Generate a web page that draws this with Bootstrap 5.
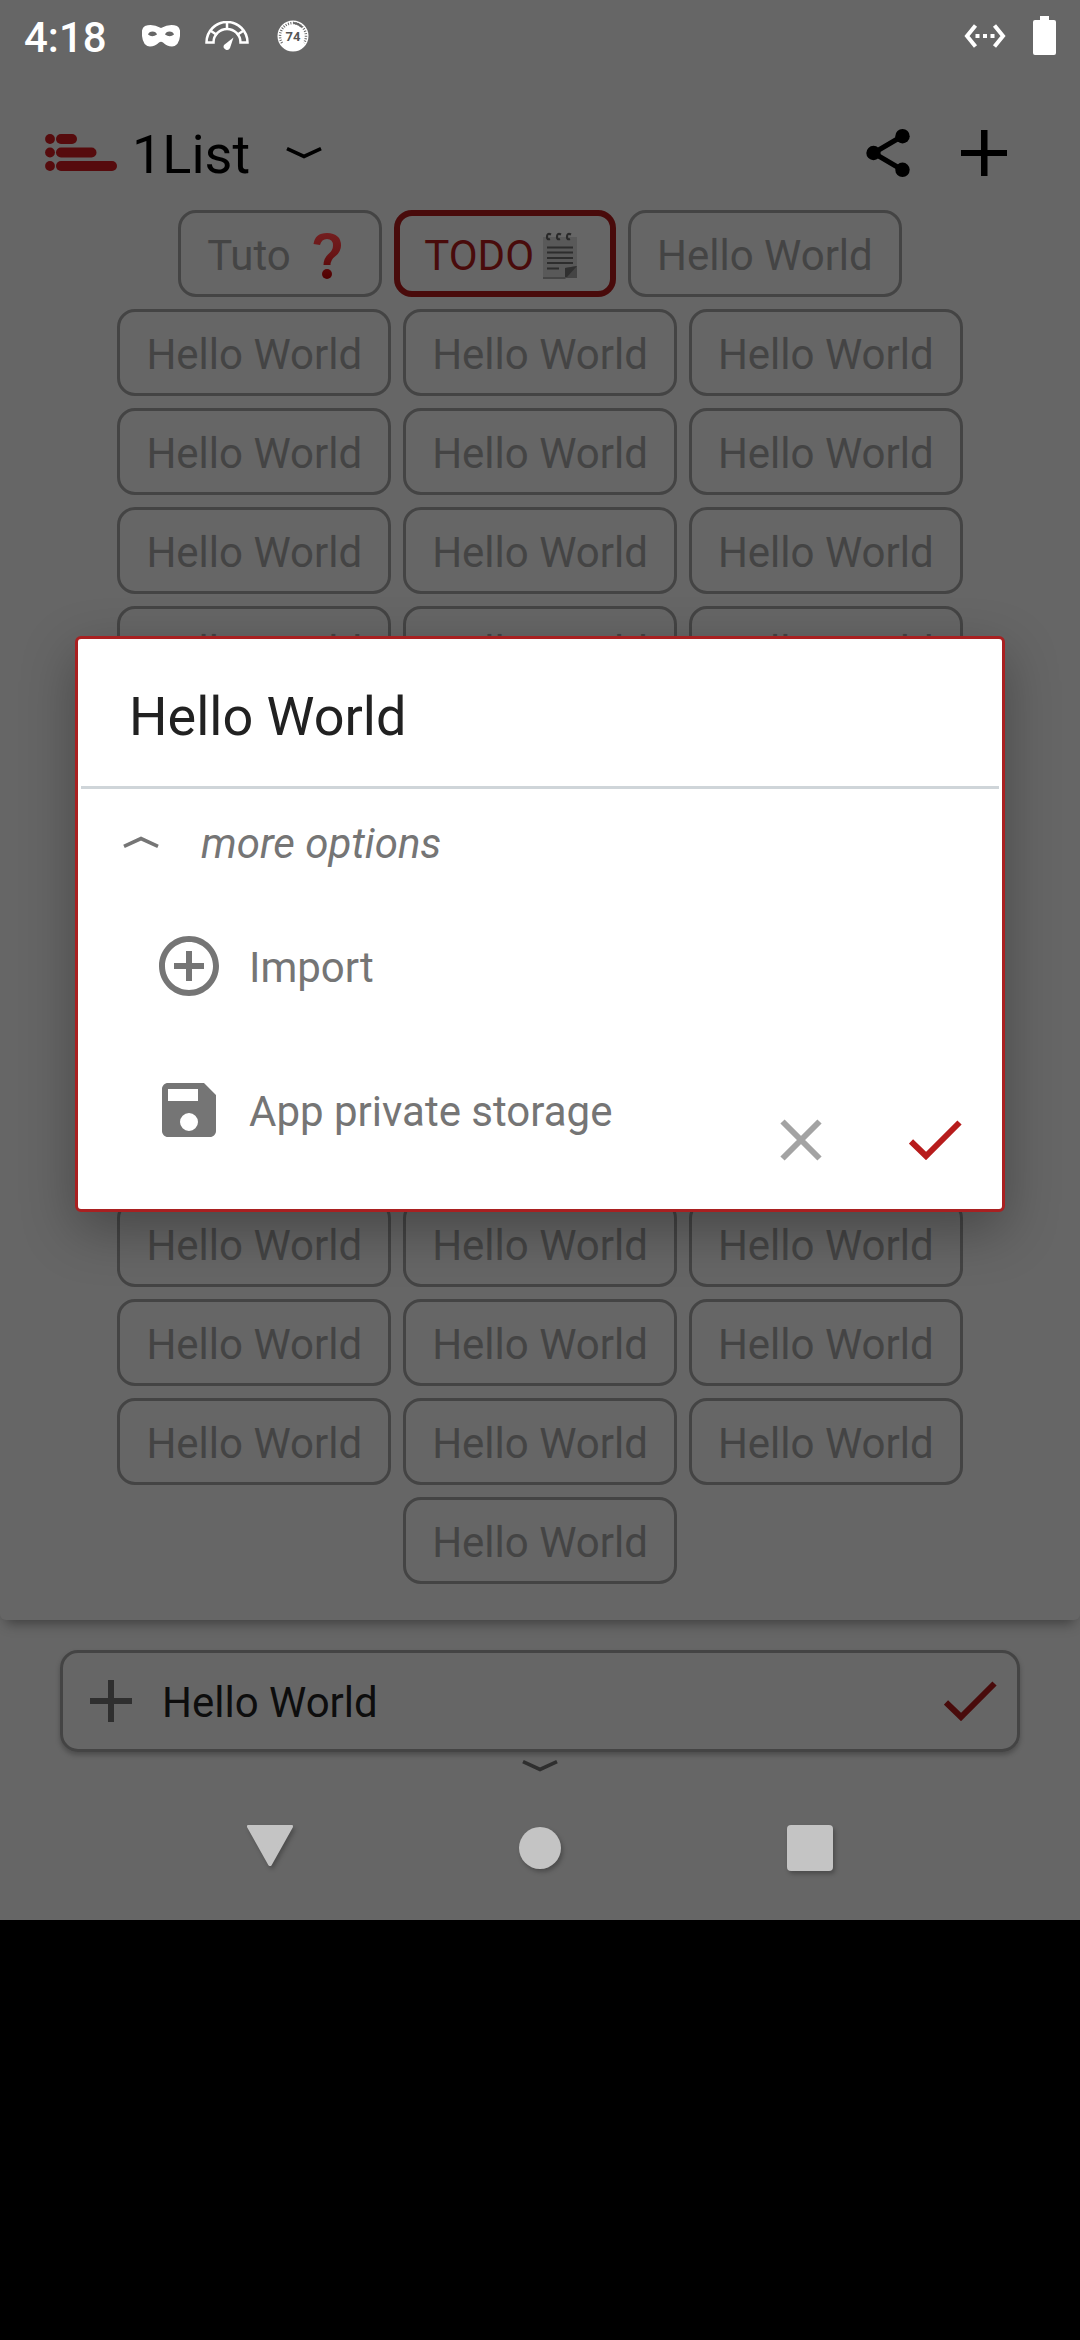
<!DOCTYPE html>
<html lang="en">
<head>
<meta charset="utf-8">
<meta name="viewport" content="width=device-width, initial-scale=1">
<title>1List</title>
<link href="https://cdn.jsdelivr.net/npm/bootstrap@5.3.0/dist/css/bootstrap.min.css" rel="stylesheet">
<style>
  body { background: #000; font-family: Roboto, "Noto Sans", sans-serif; font-size: 42px; line-height: 48px; color: #000; }
  svg { display: block; flex: none; }
  button { font: inherit; color: inherit; background: none; border: 0; padding: 0; }
  .screen { background: #666; }
  .status { height: 72px; padding: 0 24px; color: #fff; }
  .status-time { font-weight: 500; padding-top: 4px; width: 118px; }
  .lists-panel { border-radius: 6px; box-shadow: 0 9px 12px -6px rgba(0,0,0,.4); padding-bottom: 36px; }
  .app-bar { padding: 24px 48px 0 45px; height: 138px; }
  .app-name { font-size: 54px; line-height: 64px; padding-top: 4px; font-weight: 400; margin-left: 15px; }
  .bar-btn { width: 96px; height: 96px; }
  .chips { gap: 12px; padding: 0 45px; }
  .chip { border: 3px solid #444; border-radius: 18px; padding: 19px 26px 14px; color: #444; white-space: pre; display: flex; }
  .chip-on { border: 6px solid #490b0b; padding: 16px 24px 11px; color: #490b0b; }
  .entry { margin: 30px 60px 0; height: 102px; border: 3px solid #444; border-radius: 18px; padding: 0 20px 0 27px; box-shadow: 0 3px 5px rgba(0,0,0,.25); }
  .entry-text, .entry-text:focus, .name-text, .name-text:focus { background: none; border: 0; border-radius: 0; box-shadow: none; font-size: 42px; line-height: 48px; }
  .entry-text, .entry-text:focus { color: #0d0d0d; padding: 4px 0 0; margin-left: 30px; min-width: 0; }
  .fold { height: 24px; padding-top: 8px; }
  .sysnav { height: 144px; padding: 0 12.5%; }
  .sysnav svg { filter: drop-shadow(2px 3px 2px rgba(0,0,0,.25)); }
  .shade { padding: 0 75px; }
  .dialog-box { border: 3px solid #a92021; border-radius: 6px; background: #fff; color: #757575; box-shadow: 0 18px 54px rgba(0,0,0,.3); padding: 0 3px 27px; margin-top: 636px; }
  .name-text, .name-text:focus { font-size: 54px; line-height: 64px; height: 150px; color: #212121; padding: 7px 48px 0; border-bottom: 3px solid #cfd5d9; }
  .more-row { height: 105px; padding-left: 42px; gap: 42px; }
  .option-row { height: 144px; padding-left: 72px; gap: 24px; }
  .lbl { padding-top: 4px; }
  .act { width: 134px; height: 138px; }
</style>
<script src="https://cdn.jsdelivr.net/npm/bootstrap@5.3.0/dist/js/bootstrap.bundle.min.js"></script>
</head>
<body>
<div class="screen position-relative">

  <div class="status d-flex align-items-center">
    <span class="status-time">4:18</span>
    <svg width="38" height="24" viewBox="0 0 38 24"><path fill="#fff" fill-rule="evenodd" d="M3 2Q10-1 19 4Q28-1 35 2Q39 4 38 12Q37 22 30 22.500Q25 22.500 21 18.500Q19 17 17 18.500Q13 22.500 8 22.500Q1 22 0 12Q-1 4 3 2ZM6 10.500Q10 14 15 10.500Q14 7.500 10.500 7.500Q7 7.500 6 10.500ZM32 10.500Q28 14 23 10.500Q24 7.500 27.500 7.500Q31 7.500 32 10.500Z"/></svg>
    <svg width="44" height="30" viewBox="0 0 44 30" style="margin-left:25px"><g fill="none" stroke="#fff"><path stroke-width="2.500" d="M1.500 21.500A20.500 20.500 0 0 1 42.500 21.500H35.500A13.500 13.500 0 0 0 8.500 21.500Z"/><path stroke-width="2.500" d="M6 10L12 14M22 1V8M38 10L32 14"/></g><path fill="#fff" d="M28.500 16.500L25 27Q23.500 30 20.500 28.500Q17.500 26.500 19 24Z"/></svg>
    <svg width="32" height="32" viewBox="0 0 32 32" style="margin-left:28px"><circle cx="16" cy="16" r="15.500" fill="#fff"/><path fill="none" stroke="#666" stroke-width="2.500" stroke-dasharray="1 1.500" d="M5 23A13 13 0 1 1 27 23"/><path fill="none" stroke="#666" stroke-width="2" d="M17 3A13 13 0 0 1 25 7"/><text x="16" y="20.500" text-anchor="middle" font-size="13" font-weight="700" font-family="Roboto, sans-serif" fill="#555">74</text></svg>
    <svg class="ms-auto" width="42" height="24" viewBox="0 0 42 24"><path fill="none" stroke="#fff" stroke-width="4" d="M11.500 1.500L3 12L11.500 22.500M30.500 1.500L39 12L30.500 22.500"/><path fill="#fff" d="M11.500 10h4v4h-4zM19 10h4v4h-4zM26.500 10h4v4h-4z"/></svg>
    <svg width="23" height="40" viewBox="0 0 23 40" style="margin-left:27px"><path fill="#fff" d="M7 0h9v4h5q2 0 2 2v31q0 2-2 2H2q-2 0-2-2V6q0-2 2-2h5z"/></svg>
  </div>

  <main class="lists-panel">
    <header class="app-bar d-flex align-items-center">
      <svg width="72" height="38" viewBox="0 0 72 38" fill="#560b0d"><circle cx="5" cy="5" r="4.900"/><circle cx="5" cy="18.500" r="4.900"/><circle cx="5" cy="32" r="4.900"/><rect x="11" y="0" width="21" height="10" rx="5"/><rect x="11" y="13.500" width="40.500" height="10" rx="5"/><rect x="11" y="27" width="61" height="10" rx="5"/></svg>
      <h1 class="app-name mb-0">1List</h1>
      <button class="ms-4 p-2" aria-label="Choose view"><svg class="ms-1" width="36" height="12" viewBox="0 0 36 12"><path fill="none" stroke="#000" stroke-width="3.600" d="M1 1.700L18 9.500L35 1.700"/></svg></button>
      <button class="bar-btn ms-auto d-flex align-items-center justify-content-center" aria-label="Share"><svg width="44" height="48" viewBox="0 0 44 48"><path stroke="#000" stroke-width="5" fill="none" d="M36.500 7L7.500 24L36.500 41"/><circle cx="36.500" cy="7.200" r="7.200"/><circle cx="7.500" cy="24" r="7.200"/><circle cx="36.500" cy="40.800" r="7.200"/></svg></button>
      <button class="bar-btn d-flex align-items-center justify-content-center" aria-label="Add list"><svg width="46" height="46" viewBox="0 0 46 46"><path d="M20 0h6.500v20H46v6H26.500v20H20V26H0v-6h20z"/></svg></button>
    </header>

    <div class="chips d-flex flex-wrap justify-content-center">
      <button class="chip">Tuto <svg width="52" height="48" viewBox="0 0 52 48"><defs><linearGradient id="q" gradientUnits="userSpaceOnUse" x1="0" y1="0" x2="0" y2="47"><stop offset="0" stop-color="#741f20"/><stop offset=".5" stop-color="#681415"/><stop offset="1" stop-color="#500000"/></linearGradient></defs><path fill="url(#q)" d="M12.500 12Q14 1 26 1Q40 1.500 40 13.500Q40 20 34 24.500Q29.500 28 29.500 33H22.500Q22.500 26 28 21.500Q32 18 32 13.500Q32 7 26 7Q20.500 7 19 13Z"/><circle cx="26" cy="42" r="5" fill="url(#q)"/></svg></button>
      <button class="chip chip-on">TODO<svg width="52" height="48" viewBox="0 0 52 48"><path fill="#595959" d="M9 5h34v29L33 46H9z"/><path fill="#454545" d="M43 34v12H32l-1 1H9v-2h22V36z"/><path fill="#303030" d="M31 36l12-2-10 11h-2z"/><path stroke="#2d2d2d" stroke-width="2" d="M13 15.500h26M13 20.500h26M13 26h26M13 31h26M13 36.500h12"/><g fill="none" stroke="#292929" stroke-width="2.200"><path d="M17 2.500q-4-2-4 2.500q0 3 3 2"/><path d="M27 2.500q-4-2-4 2.500q0 3 3 2"/><path d="M37 2.500q-4-2-4 2.500q0 3 3 2"/></g></svg></button>
      <button class="chip">Hello World</button>
      <button class="chip">Hello World</button><button class="chip">Hello World</button><button class="chip">Hello World</button>
      <button class="chip">Hello World</button><button class="chip">Hello World</button><button class="chip">Hello World</button>
      <button class="chip">Hello World</button><button class="chip">Hello World</button><button class="chip">Hello World</button>
      <button class="chip">Hello World</button><button class="chip">Hello World</button><button class="chip">Hello World</button>
      <button class="chip">Hello World</button><button class="chip">Hello World</button><button class="chip">Hello World</button>
      <button class="chip">Hello World</button><button class="chip">Hello World</button><button class="chip">Hello World</button>
      <button class="chip">Hello World</button><button class="chip">Hello World</button><button class="chip">Hello World</button>
      <button class="chip">Hello World</button><button class="chip">Hello World</button><button class="chip">Hello World</button>
      <button class="chip">Hello World</button><button class="chip">Hello World</button><button class="chip">Hello World</button>
      <button class="chip">Hello World</button><button class="chip">Hello World</button><button class="chip">Hello World</button>
      <button class="chip">Hello World</button><button class="chip">Hello World</button><button class="chip">Hello World</button>
      <button class="chip">Hello World</button><button class="chip">Hello World</button><button class="chip">Hello World</button>
      <button class="chip">Hello World</button>
    </div>
  </main>

  <form class="entry d-flex align-items-center">
    <svg width="42" height="42" viewBox="0 0 42 42"><path fill="#2f2f2f" d="M18 0h6v18h18v6H24v18h-6V24H0v-6h18z"/></svg>
    <input class="entry-text form-control flex-fill" type="text" value="Hello World" aria-label="New item">
    <button type="button" aria-label="Add item"><svg width="53" height="40" viewBox="0 0 53 40"><path fill="none" stroke="#490b0b" stroke-width="6" d="M2 21.500L17 36L50.500 2.500"/></svg></button>
  </form>
  <div class="fold d-flex justify-content-center align-items-start">
    <button aria-label="Show more"><svg width="36" height="12" viewBox="0 0 36 12"><path fill="none" stroke="#2f2f2f" stroke-width="3.600" d="M1 1.700L18 9.500L35 1.700"/></svg></button>
  </div>

  <nav class="sysnav d-flex align-items-center" aria-label="System">
    <button class="flex-fill d-flex justify-content-center" aria-label="Back"><svg width="48" height="46" viewBox="0 0 48 46"><path fill="#c4c4c4" stroke="#c4c4c4" stroke-width="4" stroke-linejoin="round" d="M3 1.500H45L24 39Z"/></svg></button>
    <button class="flex-fill d-flex justify-content-center" aria-label="Home"><svg width="48" height="46" viewBox="0 0 48 46"><circle cx="24" cy="23" r="21" fill="#c4c4c4"/></svg></button>
    <button class="flex-fill d-flex justify-content-center" aria-label="Recent apps"><svg width="48" height="46" viewBox="0 0 48 46"><rect x="1" width="46" height="46" rx="4" fill="#c4c4c4"/></svg></button>
  </nav>

  <div class="shade position-absolute top-0 start-0 w-100 h-100">
    <div class="dialog-box position-relative" role="dialog" aria-label="New list">
      <input class="name-text form-control" type="text" value="Hello World" aria-label="List name">
      <button class="more-row d-flex align-items-center w-100">
        <svg width="36" height="12" viewBox="0 0 36 12"><path fill="none" stroke="#757575" stroke-width="3.600" d="M1 10.300L18 2.500L35 10.300"/></svg>
        <em class="lbl">more options</em>
      </button>
      <button class="option-row d-flex align-items-center w-100">
        <svg width="72" height="72" viewBox="0 0 24 24"><path fill="#757575" d="M13 7h-2v4H7v2h4v4h2v-4h4v-2h-4V7zm-1-5C6.480 2 2 6.480 2 12s4.480 10 10 10 10-4.480 10-10S17.520 2 12 2zm0 18c-4.410 0-8-3.590-8-8s3.590-8 8-8 8 3.590 8 8-3.590 8-8 8z"/></svg>
        <span class="lbl">Import</span>
      </button>
      <button class="option-row d-flex align-items-center w-100">
        <svg width="72" height="72" viewBox="0 0 24 24"><path fill="#757575" fill-rule="evenodd" d="M5 3h12l4 4v12c0 1.100-.9 2-2 2H5c-1.110 0-2-.9-2-2V5c0-1.100.89-2 2-2zM5 5v4h10V5zM12 13a3 3 0 1 0 0 6 3 3 0 0 0 0-6z"/></svg>
        <span class="lbl">App private storage</span>
      </button>
      <div class="position-absolute bottom-0 end-0 d-flex">
        <button class="act d-flex align-items-center justify-content-center" aria-label="Cancel"><svg width="42" height="42" viewBox="0 0 42 42"><path stroke="#a3a3a3" stroke-width="6" d="M2.500 2.500L39.500 39.500M39.500 2.500L2.500 39.500"/></svg></button>
        <button class="act d-flex align-items-center justify-content-center" aria-label="Confirm"><svg width="53" height="40" viewBox="0 0 53 40"><path fill="none" stroke="#b71c1c" stroke-width="6" d="M2 21.500L17 36L50.500 2.500"/></svg></button>
      </div>
    </div>
  </div>
</div>
</body>
</html>
